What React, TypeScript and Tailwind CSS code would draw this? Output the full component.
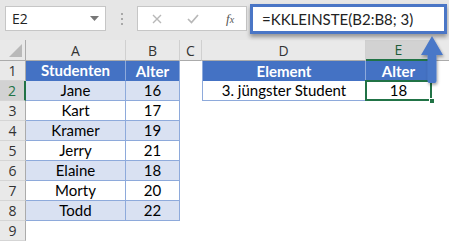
import React from "react";

const FONT = { fontFamily: "Lato, 'Open Sans', sans-serif" };
const UI = { fontFamily: "'Open Sans', 'Noto Sans', sans-serif" };

const students: [string, number][] = [
  ["Jane", 16],
  ["Kart", 17],
  ["Kramer", 19],
  ["Jerry", 21],
  ["Elaine", 18],
  ["Morty", 20],
  ["Todd", 22],
];

function RowHead({ n, sel }: { n: number; sel?: boolean }) {
  return (
    <div
      className={
        "h-[20px] flex items-center justify-center text-[14px] border-b border-[#d5d5d5] " +
        (sel
          ? "bg-[#d2d2d2] text-[#217346] border-r-2 border-r-[#217346]"
          : "bg-[#e9e9e9] text-[#333] border-r border-r-[#ababab]")
      }
      style={UI}
    >
      {n}
    </div>
  );
}

function Blank() {
  return <div className="h-[20px] bg-white" />;
}

export default function App() {
  const rows: React.ReactNode[] = [];
  rows.push(
    <React.Fragment key="r1">
      <RowHead n={1} />
      <div className="h-[20px] bg-[#4472c4] border-r border-[#8eaadb] border-b border-b-[#4472c4] flex items-center justify-center text-white font-bold text-[15px]">
        Studenten
      </div>
      <div className="h-[20px] bg-[#4472c4] border-r border-[#8eaadb] flex items-center justify-center text-white font-bold text-[15px]">
        Alter
      </div>
      <Blank />
      <div className="h-[20px] bg-[#4472c4] border-l border-[#8eaadb] border-r border-r-[#8eaadb] flex items-center justify-center text-white font-bold text-[15px]">
        Element
      </div>
      <div className="h-[20px] bg-[#4472c4] border-r border-[#8eaadb] flex items-center justify-center text-white font-bold text-[15px]">
        Alter
      </div>
      <Blank />
    </React.Fragment>
  );
  students.forEach(([name, age], i) => {
    const rowNum = i + 2;
    const band = i % 2 === 0 ? "bg-[#d9e1f2]" : "bg-white";
    rows.push(
      <React.Fragment key={"r" + rowNum}>
        <RowHead n={rowNum} sel={rowNum === 2} />
        <div className={"h-[20px] border-r border-b border-[#8eaadb] flex items-center justify-center text-[15px] text-black " + band}>
          {name}
        </div>
        <div className={"h-[20px] border-r border-b border-[#8eaadb] flex items-center justify-center text-[15px] text-black " + band}>
          {age}
        </div>
        <Blank />
        {rowNum === 2 ? (
          <>
            <div className="h-[20px] bg-white border-l border-b border-r border-[#8eaadb] flex items-center justify-center text-[15px] text-black">
              3. jüngster Student
            </div>
            <div className="relative h-[20px] bg-white border-b border-r border-[#8eaadb] flex items-center justify-center text-[15px] text-black">
              18
              <div className="absolute -left-[1px] -top-[1px] -right-[1px] -bottom-[1px] border-2 border-[#217346]" />
              <div className="absolute -right-[4px] -bottom-[4px] w-[6px] h-[6px] bg-[#217346] border border-white" />
            </div>
          </>
        ) : (
          <>
            <Blank />
            <Blank />
          </>
        )}
        <Blank />
      </React.Fragment>
    );
  });
  rows.push(
    <React.Fragment key="r9">
      <RowHead n={9} />
      <Blank />
      <Blank />
      <Blank />
      <Blank />
      <Blank />
      <Blank />
    </React.Fragment>
  );

  const colHead = (label: string, sel?: boolean) => (
    <div
      className={
        "h-[21px] flex items-center justify-center text-[14px] border-r border-r-[#d0d0d0] " +
        (sel
          ? "bg-[#d2d2d2] text-[#1e5c38] border-b-2 border-b-[#217346]"
          : "bg-[#e9e9e9] text-[#333] border-b border-b-[#ababab]")
      }
      style={UI}
    >
      {label}
    </div>
  );

  return (
    <div className="relative w-[449px] h-[242px] bg-white overflow-hidden" style={FONT}>
      {/* Formula bar */}
      <div className="h-[40px] bg-[#e6e6e6] flex items-start pt-[6px] pl-[5px]">
        <div className="w-[101px] h-[25px] bg-white border border-[#c6c6c6] flex items-center justify-between pl-[6px] pr-[6px]">
          <span className="text-[14px] text-[#222]" style={UI}>E2</span>
          <svg width="9" height="5" viewBox="0 0 9 5">
            <path d="M0 0 L9 0 L4.5 5 Z" fill="#777" />
          </svg>
        </div>
        <div className="w-[31px] h-[25px] flex flex-col items-center justify-center gap-[3px]">
          <div className="w-[2px] h-[2px] bg-[#a8a8a8]" />
          <div className="w-[2px] h-[2px] bg-[#a8a8a8]" />
          <div className="w-[2px] h-[2px] bg-[#a8a8a8]" />
        </div>
        <div className="w-[110px] h-[25px] bg-white border border-[#c6c6c6] flex items-center">
          <svg className="ml-[14px]" width="10" height="10" viewBox="0 0 10 10">
            <path d="M1 1 L9 9 M9 1 L1 9" stroke="#b8b8b8" strokeWidth="1.4" />
          </svg>
          <svg className="ml-[25px]" width="12" height="10" viewBox="0 0 12 10">
            <path d="M1 5 L4.5 8.5 L11 1" stroke="#b8b8b8" strokeWidth="1.7" fill="none" />
          </svg>
          <span className="ml-[27px] text-[13px] italic text-[#555]" style={{ fontFamily: "'Liberation Serif', serif" }}>
            f<span className="text-[10px]">x</span>
          </span>
        </div>
      </div>

      {/* Highlighted formula input */}
      <div className="absolute left-[250px] top-[4px] w-[197px] h-[30px] bg-white border-[3px] border-[#4a76c6] shadow-[0_3px_4px_rgba(0,0,0,0.35)] flex items-center pl-[9px]">
        <span className="text-[15px] text-[#222]">=KKLEINSTE(B2:B8; 3)</span>
      </div>

      {/* Grid */}
      <div className="grid grid-cols-[26px_100px_54px_22px_164px_66px_1fr]">
        <div className="h-[21px] bg-[#e9e9e9] border-r border-r-[#ababab] border-b border-b-[#ababab] relative">
          <svg className="absolute right-[3px] bottom-[3px]" width="13" height="13" viewBox="0 0 13 13">
            <path d="M13 0 L13 13 L0 13 Z" fill="#b9b9b9" />
          </svg>
        </div>
        {colHead("A")}
        {colHead("B")}
        {colHead("C")}
        {colHead("D")}
        {colHead("E", true)}
        <div className="h-[21px] bg-[#e9e9e9] border-b border-b-[#ababab]" />
        {rows}
      </div>

      {/* Arrow overlay */}
      <svg className="absolute left-[416px] top-[33px]" width="32" height="56" viewBox="0 0 32 56">
        <defs>
          <filter id="sh" x="-50%" y="-20%" width="200%" height="150%">
            <feDropShadow dx="1" dy="2" stdDeviation="1.5" floodColor="#000" floodOpacity="0.35" />
          </filter>
        </defs>
        <path
          d="M16 3 L27 22 L20.5 22 L20.5 48 Q20.5 50 18.5 50 L13.5 50 Q11.5 50 11.5 48 L11.5 22 L5 22 Z"
          fill="#4a78c8"
          filter="url(#sh)"
        />
      </svg>
    </div>
  );
}
